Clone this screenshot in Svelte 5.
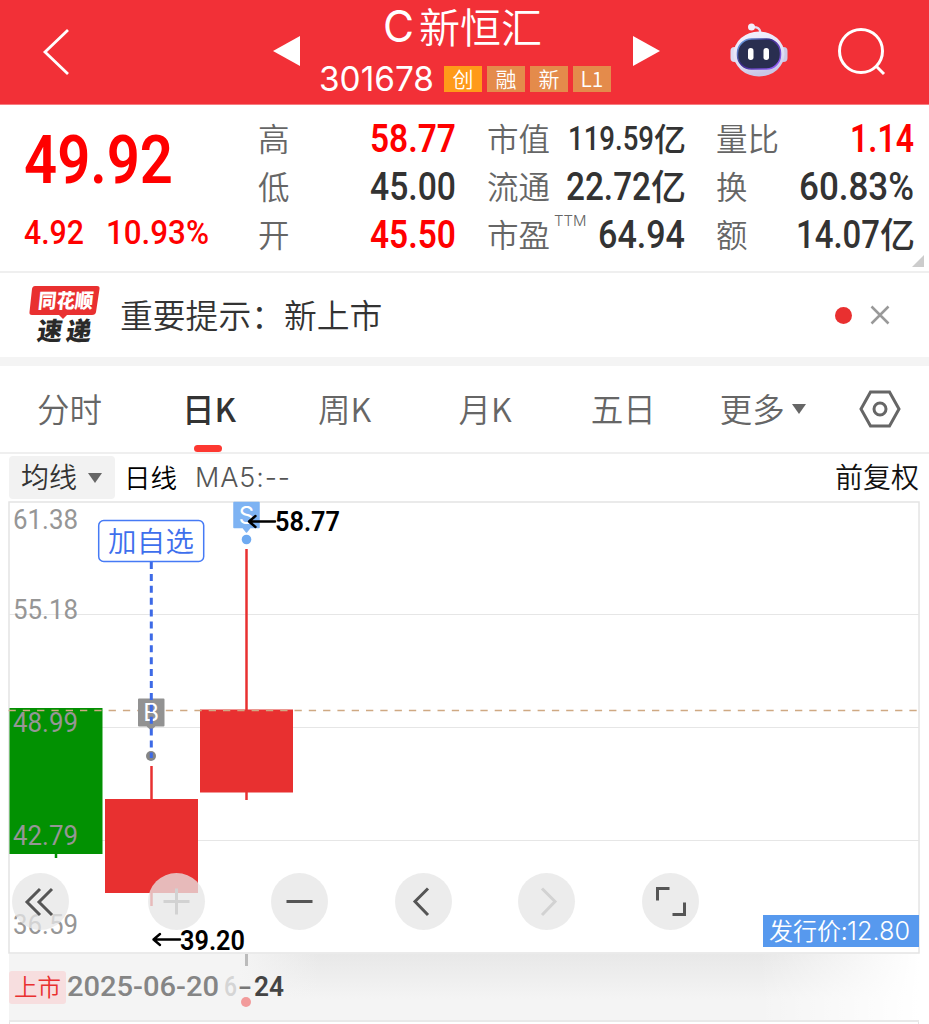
<script>
    const badges = ['创', '融', '新', 'L1'];

    const stats = [
        [
            { label: '高', value: '58.77', width: 86, up: true },
            { label: '低', value: '45.00', width: 86 },
            { label: '开', value: '45.50', width: 86, up: true }
        ],
        [
            { label: '市值', value: '119.59', width: 86, unit: '亿', small: true },
            { label: '流通', value: '22.72', width: 85, unit: '亿' },
            { label: '市盈', sup: 'TTM', value: '64.94', width: 87 }
        ],
        [
            { label: '量比', value: '1.14', width: 64, up: true },
            { label: '换', value: '60.83%', width: 115 },
            { label: '额', value: '14.07', width: 84, unit: '亿' }
        ]
    ];

    const tabs = [
        { name: '分时', left: 37 },
        { name: '日K', left: 80, active: true },
        { name: '周K', left: 82 },
        { name: '月K', left: 87 },
        { name: '五日', left: 79 },
        { name: '更多', left: 64, more: true }
    ];

    const axis = [
        { price: '61.38', y: 529 },
        { price: '55.18', y: 618.5 },
        { price: '48.99', y: 731.5 },
        { price: '42.79', y: 844.5 },
        { price: '36.59', y: 933.5 }
    ];

    const candles = [
        { x: 9.5, open: 708, close: 854, high: 708, low: 858, color: '#029102' },
        { x: 105, open: 799, close: 893, high: 766, low: 906, color: '#e83030' },
        { x: 200, open: 709.5, close: 792.5, high: 549, low: 800, color: '#e83030' }
    ];

    const controls = [
        { id: 'first', path: 'M28 16L15 29L28 42M40 16L27 29L40 42' },
        { id: 'zoom-in', path: 'M15.500 28.500H41.500M28.500 15.500V41.500', off: true },
        { id: 'zoom-out', path: 'M15.500 28.500H41.500' },
        { id: 'prev', path: 'M33 15.500L20 28.500L33 42' },
        { id: 'next', path: 'M24 15.500L37 28.500L24 42', off: true },
        { id: 'full', path: 'M15.500 27.500V15.500H27.500M42.500 29.500V41.500H30.500' }
    ];
</script>

{#snippet num(text, width, size)}
    <svg class="num" {width} height={size * 0.711} font-size={size}>
        <text x="0" y={size * 0.711} textLength={width} lengthAdjust="spacingAndGlyphs">{text}</text>
    </svg>
{/snippet}

<div class="page">
    <header>
        <svg class="back" width="30" height="52" viewBox="0 0 30 52"><path d="M27 4L4 26L27 48" /></svg>
        <svg class="arrow" width="27" height="30"><path d="M0 15L27 0V30Z" /></svg>
        <div class="stock">
            <h1>{@render num('C', 31, 44)}<span>新恒汇</span></h1>
            <div class="code">
                {@render num('301678', 115, 34)}
                {#each badges as badge, i}
                    <span class="badge" class:main={i === 0}>{badge}</span>
                {/each}
            </div>
        </div>
        <svg class="arrow next" width="27" height="30"><path d="M27 15L0 0V30Z" /></svg>
        <svg class="robot" width="58" height="54" viewBox="0 0 58 54">
            <defs>
                <linearGradient id="shell" x1="0" y1="0" x2="0.3" y2="1">
                    <stop offset="0" stop-color="#f5f3ff" />
                    <stop offset="0.75" stop-color="#dedcf3" />
                    <stop offset="1" stop-color="#c9c7e6" />
                </linearGradient>
                <linearGradient id="rim" x1="0" y1="0" x2="1" y2="0.8">
                    <stop offset="0" stop-color="#78b9f6" />
                    <stop offset="0.45" stop-color="#382986" />
                    <stop offset="1" stop-color="#905cf5" />
                </linearGradient>
            </defs>
            <path d="M21 4.500C27 3.500 30 5 30.500 10" fill="none" stroke="#dfddf3" stroke-width="2.200" />
            <circle cx="21.500" cy="4" r="3.500" fill="#f3effb" />
            <rect x="0.500" y="24" width="8" height="15" rx="4" fill="#dddbf2" />
            <rect x="49.500" y="24" width="8" height="15" rx="4" fill="#cbc9e7" />
            <ellipse cx="29" cy="31" rx="25.500" ry="22.500" fill="url(#shell)" />
            <rect x="7.500" y="16" width="43" height="30" rx="14" fill="#292e50" stroke="url(#rim)" stroke-width="1.500" />
            <rect x="18" y="25" width="5.500" height="12" rx="2.700" fill="#fff" />
            <rect x="33.500" y="25" width="5.500" height="12" rx="2.700" fill="#fff" />
        </svg>
        <svg class="search" width="50" height="50" viewBox="0 0 50 50">
            <circle cx="24" cy="24" r="21.500" />
            <path d="M39 39L47 47" />
        </svg>
    </header>

    <section class="quote">
        <div class="last">
            {@render num('49.92', 149, 66)}
            <div class="change">
                {@render num('4.92', 60, 34)}
                {@render num('10.93%', 103, 34)}
            </div>
        </div>
        {#each stats as column}
            <ul>
                {#each column as d}
                    <li class:up={d.up}>
                        <span class="label">{d.label}{#if d.sup}<sup>{d.sup}</sup>{/if}</span>
                        <span class="value" class:small={d.small}>
                            {@render num(d.value, d.width, d.small ? 32.5 : 38)}
                            {#if d.unit}<b>{d.unit}</b>{/if}
                        </span>
                    </li>
                {/each}
            </ul>
        {/each}
        <i class="corner"></i>
    </section>

    <section class="news">
        <svg class="brand" width="72" height="62" viewBox="0 0 72 62">
            <path d="M6 1H68Q71 1 70.500 4L67 27Q66.500 30 63 30H38L34 34L30 30H3Q0 30 0.500 27L3 4Q3.500 1 6 1Z" fill="#e93030" />
            <text class="brand-top" x="11" y="23" textLength="55" lengthAdjust="spacingAndGlyphs" transform="skewX(-6)">同花顺</text>
            <text class="brand-sub" x="15" y="55" textLength="54" transform="skewX(-8)">速递</text>
        </svg>
        <p>重要提示：新上市</p>
        <i class="dot"></i>
        <svg class="close" width="20" height="20" viewBox="0 0 20 20"><path d="M1.500 1.500L18.500 18.500M18.500 1.500L1.500 18.500" /></svg>
    </section>

    <nav>
        {#each tabs as tab}
            <div class="tab" class:active={tab.active} style="margin-left:{tab.left}px">
                {tab.name}
                {#if tab.more}<i class="caret"></i>{/if}
            </div>
        {/each}
        <svg class="settings" width="42" height="38" viewBox="0 0 42 38">
            <path d="M11.500 2H30.500L40 19L30.500 36H11.500L2 19Z" />
            <circle cx="21" cy="19" r="6" />
        </svg>
    </nav>

    <div class="indicator">
        <div class="select">均线<i class="caret"></i></div>
        <span class="period">日线</span>
        <span class="ma">MA5:--</span>
        <span class="adjust">前复权</span>
    </div>

    <div class="chart">
        <svg class="plot" width="929" height="453" viewBox="0 501 929 453">
            <rect x="9" y="502" width="910" height="451" fill="none" stroke="#e4e4e4" stroke-width="1.500" />
            <path d="M9 614.500H919M9 727.500H919M9 840.500H919" stroke="#e6e6e6" />
            {#each candles as c}
                <path d="M{c.x + 46.5} {c.high}V{c.low}" stroke={c.color} stroke-width="2.500" />
                <rect x={c.x} y={c.open} width="93" height={c.close - c.open} fill={c.color} />
            {/each}
            <path d="M8.500 710.500H919" stroke="#cfa983" stroke-width="1.300" stroke-dasharray="7.300 7" />

            <g class="axis">
                {#each axis as a}
                    <text x="13" y={a.y} textLength="65" lengthAdjust="spacingAndGlyphs">{a.price}</text>
                {/each}
            </g>

            <path d="M139 699.500H163.500V725.500H155L151 729L147 725.500H139Z" fill="#929292" stroke="#929292" stroke-width="2" stroke-linejoin="round" />
            <text class="mark" x="151" y="721" text-anchor="middle">B</text>
            <circle cx="151" cy="756" r="5" fill="#858585" />
            <path d="M151.300 562V758" stroke="#3d6ae6" stroke-width="3" stroke-dasharray="7 4.900" />
            <rect x="98.700" y="520.500" width="105" height="41" rx="5" fill="#fff" stroke="#467af5" stroke-width="1.500" />
            <text class="watch" x="108" y="552" textLength="86">加自选</text>

            <path d="M234 502.500H259V527.500H250L246.500 532L243 527.500H234Z" fill="#7eb3f3" stroke="#7eb3f3" stroke-width="1.500" stroke-linejoin="round" />
            <text class="mark" x="246.500" y="524" text-anchor="middle">S</text>
            <circle cx="246.500" cy="539.500" r="4.800" fill="#6faaf1" />
            <path class="pointer" d="M275 521.500H249M255.500 516L249 521.500L255.500 527" />
            <text class="extreme" x="275" y="531" textLength="65" lengthAdjust="spacingAndGlyphs">58.77</text>
            <path class="pointer" d="M180 939.500H153.500M160 934L153.500 939.500L160 945" />
            <text class="extreme" x="180" y="949.500" textLength="65" lengthAdjust="spacingAndGlyphs">39.20</text>
        </svg>
        <div class="controls">
            {#each controls as c}
                <svg class="control {c.id}" class:off={c.off} width="57" height="57" viewBox="0 0 57 57"><path d={c.path} /></svg>
            {/each}
        </div>
        <div class="issue"><span>发行价:</span>{@render num('12.80', 63, 25)}</div>
    </div>

    <footer>
        <span class="listed">上市</span>
        <span class="date">{@render num('2025-06-20', 152, 28)}</span>
        <span class="ghost">{@render num('6', 13, 28)}</span>
        <span class="dash">{@render num('-', 14, 28)}</span>
        <span class="day">{@render num('24', 30, 28)}</span>
        <i class="tick"></i>
        <i class="event"></i>
    </footer>
    <div class="next-panel"></div>
</div>

<style>
    :global(body) {
        background: #fff;
    }
    .page {
        box-sizing: border-box;
        color: #333;
        font-family: "Noto Sans CJK SC", Inter, sans-serif;
        font-weight: 350;
        height: 1024px;
        width: 929px;
    }
    svg {
        display: block;
        flex: none;
    }
    .num {
        fill: currentColor;
        font-family: Roboto, "Liberation Sans", sans-serif;
        overflow: visible;
    }
    header {
        align-items: flex-start;
        background: #f23037;
        border-bottom: 1px solid #f77c80;
        color: #fff;
        display: flex;
        height: 104px;
    }
    header .back {
        fill: none;
        margin: 26px 0 0 41px;
        stroke: #fff;
        stroke-width: 2.8;
    }
    header .arrow {
        fill: #fff;
        margin: 36px 0 0 202px;
    }
    header .arrow.next {
        margin-left: 21px;
    }
    .stock {
        margin-left: 20px;
        width: 292px;
    }
    h1 {
        align-items: center;
        display: flex;
        font-size: 41px;
        font-weight: 350;
        gap: 5px;
        height: 54px;
        line-height: 50px;
        margin: 0 0 0 63px;
    }
    h1 span {
        padding-bottom: 4px;
    }
    h1 .num,
    .code .num {
        font-family: Inter, sans-serif;
        font-weight: 400;
    }
    .code {
        align-items: center;
        display: flex;
        gap: 5px;
        height: 50px;
        margin-left: -1px;
    }
    .code .num {
        margin-right: 5px;
    }
    .badge {
        background: #e48b4b;
        font-size: 21px;
        height: 26px;
        line-height: 24px;
        text-align: center;
        width: 38px;
    }
    .badge.main {
        background: #ff9a19;
    }
    .robot {
        margin: 23px 0 0 70px;
    }
    .search {
        fill: none;
        margin: 27px 0 0 49px;
        stroke: #fff;
        stroke-width: 3;
    }
    .quote {
        border-bottom: 2px solid #efefef;
        box-sizing: border-box;
        display: flex;
        gap: 31px;
        height: 168px;
        padding: 10px 14px 0 24px;
        position: relative;
    }
    .last {
        color: #f00;
        flex: none;
        padding-top: 21px;
        width: 203px;
    }
    .last .num {
        font-weight: 600;
    }
    .change {
        display: flex;
        gap: 22px;
        margin-top: 37px;
    }
    .change .num {
        font-weight: 500;
    }
    ul {
        flex: none;
        list-style: none;
        margin: 0;
        padding: 0;
        width: 198px;
    }
    li {
        align-items: center;
        display: flex;
        height: 48px;
        justify-content: space-between;
    }
    .label {
        color: #666;
        font-size: 31.5px;
        line-height: 44px;
        padding-bottom: 4px;
        position: relative;
        white-space: nowrap;
    }
    sup {
        font-family: Inter, sans-serif;
        font-size: 15px;
        left: 67px;
        letter-spacing: 0;
        line-height: 16px;
        position: absolute;
        top: 2px;
    }
    .value {
        align-items: center;
        display: flex;
    }
    .value .num {
        font-weight: 500;
    }
    .value b {
        font-size: 35px;
        font-weight: 500;
        line-height: 44px;
        margin-right: -1px;
        padding-bottom: 4px;
    }
    .value.small b {
        font-size: 32px;
    }
    .up .value {
        color: #f00;
    }
    .up .num {
        font-weight: 600;
    }
    .corner {
        border-bottom: 12px solid #ccc;
        border-left: 12px solid transparent;
        bottom: 4px;
        position: absolute;
        right: 5px;
    }
    .news {
        align-items: center;
        border-bottom: 9px solid #f4f4f4;
        display: flex;
        height: 84px;
    }
    .brand {
        margin: 2px 0 0 29px;
    }
    .brand-top,
    .brand-sub {
        fill: #fff;
        font-size: 20px;
        font-weight: 900;
    }
    .brand-sub {
        fill: #292929;
        font-size: 25px;
    }
    .news p {
        font-size: 32.8px;
        margin: 0 0 0 19px;
        padding-bottom: 4px;
        width: 715px;
    }
    .dot {
        background: #e93030;
        border-radius: 50%;
        height: 17px;
        width: 17px;
    }
    .close {
        fill: none;
        margin-left: 18px;
        stroke: #999;
        stroke-width: 2.5;
    }
    nav {
        align-items: center;
        border-bottom: 2px solid #efefef;
        display: flex;
        height: 86px;
    }
    .tab {
        align-items: center;
        box-sizing: border-box;
        color: #666;
        display: flex;
        font-size: 32.5px;
        height: 86px;
        padding-bottom: 3px;
        position: relative;
    }
    .tab.active {
        color: #333;
        font-weight: 500;
    }
    .tab.active::after {
        background: #fd3831;
        border-radius: 4px;
        bottom: 0;
        content: "";
        height: 7px;
        left: 12px;
        position: absolute;
        width: 28px;
    }
    .caret {
        border: 7px solid transparent;
        border-bottom: 0;
        border-top: 10px solid #666;
        margin: 3px 0 0 7px;
    }
    .settings {
        fill: none;
        margin-left: 53px;
        stroke: #666;
        stroke-width: 3;
    }
    .indicator {
        align-items: center;
        display: flex;
        font-size: 28px;
        height: 47px;
        padding: 0 10px 0 9px;
    }
    .select {
        align-items: center;
        background: #f2f2f2;
        border-radius: 4px;
        box-sizing: border-box;
        display: flex;
        height: 43px;
        padding: 0 0 3px 12px;
        width: 106px;
    }
    .select .caret {
        margin-left: 11px;
    }
    .period {
        color: #000;
        font-size: 26.5px;
        margin-left: 9px;
        padding-bottom: 3px;
    }
    .ma {
        color: #555;
        font-family: Inter, sans-serif;
        font-size: 27px;
        letter-spacing: 0.9px;
        margin-left: 18px;
    }
    .adjust {
        color: #111;
        margin-left: auto;
        padding-bottom: 4px;
    }
    .chart {
        height: 453px;
        position: relative;
    }
    .plot {
        overflow: visible;
    }
    .axis {
        fill: #969696;
        font-family: Roboto, sans-serif;
        font-size: 28px;
        font-weight: 450;
    }
    .mark {
        fill: #fff;
        font-family: Inter, sans-serif;
        font-size: 24px;
        font-weight: 400;
    }
    .watch {
        fill: #3e6fed;
        font-size: 28.5px;
    }
    .extreme {
        fill: #000;
        font-family: Roboto, sans-serif;
        font-size: 28px;
        font-weight: 600;
    }
    .pointer {
        fill: none;
        stroke: #000;
        stroke-linecap: round;
        stroke-linejoin: round;
        stroke-width: 2.4;
    }
    .controls {
        display: flex;
        gap: 66.5px;
        left: 12px;
        position: absolute;
        top: 372px;
    }
    .control {
        background: rgba(230, 230, 230, 0.76);
        border-radius: 50%;
        fill: none;
        stroke: #555;
        stroke-width: 3;
    }
    .control.first {
        margin-right: 12px;
    }
    .control.off {
        stroke: #d2d2d2;
    }
    .issue {
        align-items: center;
        background: #5799ee;
        box-sizing: border-box;
        color: #fff;
        display: flex;
        font-size: 24px;
        height: 32px;
        left: 763px;
        line-height: 30px;
        padding-left: 6px;
        position: absolute;
        top: 414px;
        white-space: nowrap;
        width: 156px;
    }
    .issue span {
        padding-bottom: 2px;
    }
    .issue .num {
        font-family: Inter, sans-serif;
    }
    footer {
        align-items: center;
        background:
            linear-gradient(90deg, transparent 750px, #fff 910px),
            linear-gradient(90deg, #f4f4f4 230px, transparent 310px),
            linear-gradient(#e8e8e8, #f4f4f4 45px);
        border-bottom: 2px solid #e9e9e9;
        display: flex;
        height: 66px;
        margin-left: 9px;
        position: relative;
        width: 910px;
    }
    .listed {
        background: #f7dedf;
        border-radius: 3px;
        color: #e93030;
        font-size: 23.5px;
        height: 33px;
        line-height: 31px;
        text-align: center;
        width: 57px;
    }
    footer .num {
        font-weight: 500;
        margin-bottom: 3px;
    }
    .date {
        color: #858585;
        margin-left: 1px;
    }
    .ghost {
        color: #d5d5d5;
        margin-left: 5px;
    }
    .dash {
        color: #777;
        margin-left: 1px;
    }
    .day {
        color: #444;
        margin-left: 2px;
    }
    .day .num {
        font-weight: 600;
    }
    .tick {
        background: #bbb;
        height: 12px;
        left: 236px;
        position: absolute;
        top: 0;
        width: 3px;
    }
    .event {
        background: #f29b9b;
        border-radius: 50%;
        height: 10px;
        left: 232px;
        position: absolute;
        top: 43px;
        width: 10px;
    }
    .next-panel {
        border: 1px solid #e4e4e4;
        border-width: 0 1px;
        box-sizing: border-box;
        height: 2px;
        margin-left: 9px;
        width: 910px;
    }
</style>
